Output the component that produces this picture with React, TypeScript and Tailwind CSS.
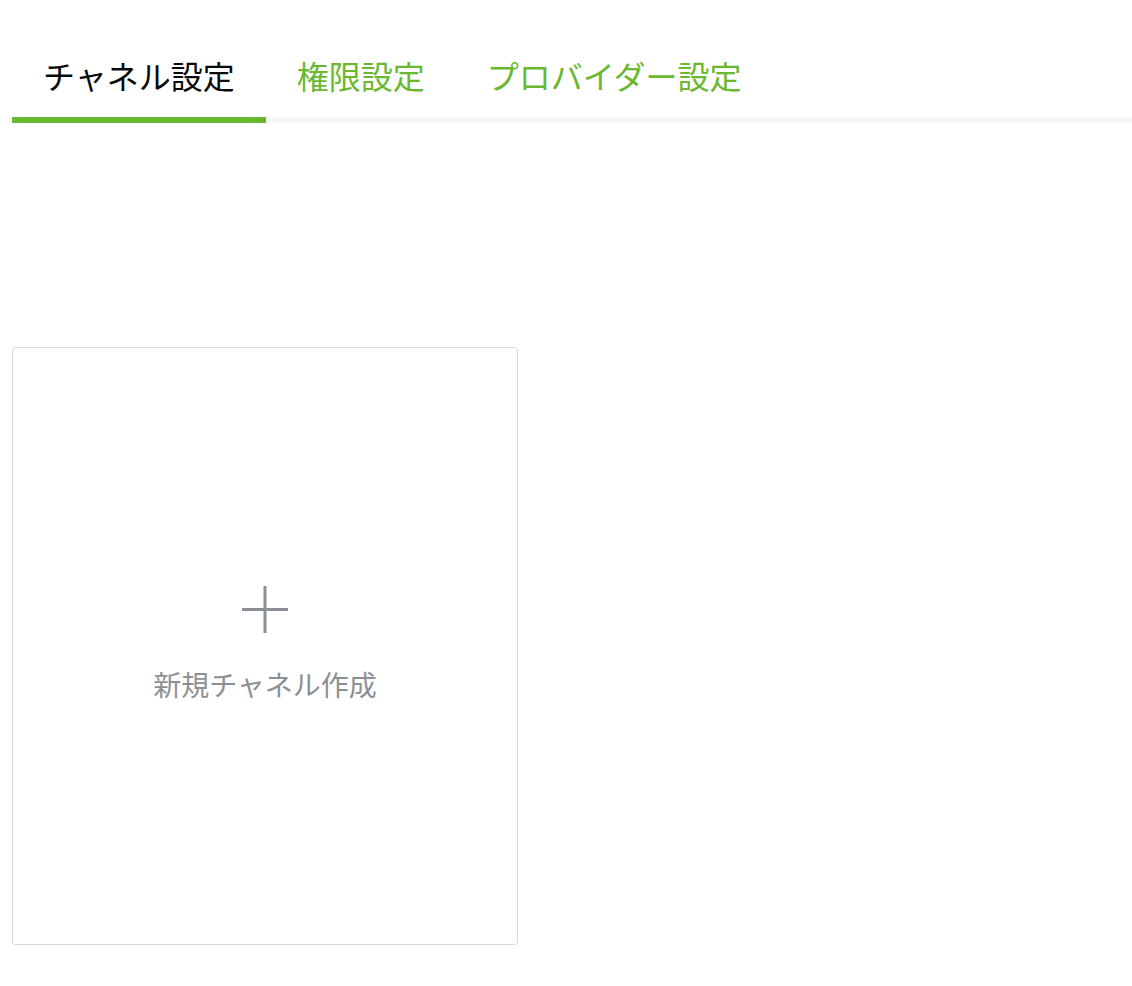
import { useState } from "react";

const tabs = ["チャネル設定", "権限設定", "プロバイダー設定"];

function PlusIcon() {
  return (
    <svg width="46" height="47" viewBox="0 0 46 47" fill="none" aria-hidden="true">
      <line x1="23" y1="0" x2="23" y2="47" stroke="#8a8f96" strokeWidth="3" />
      <line x1="0" y1="23.5" x2="46" y2="23.5" stroke="#8a8f96" strokeWidth="3" />
    </svg>
  );
}

export default function App() {
  const [active, setActive] = useState(0);

  return (
    <div
      className="min-h-screen bg-white pl-3 pt-[52px]"
      style={{ fontFamily: '"Noto Sans CJK JP", "Noto Sans", sans-serif' }}
    >
      <div className="flex border-b-[6px] border-[#f7f7f7]">
        {tabs.map((label, i) => (
          <button
            key={label}
            onClick={() => setActive(i)}
            className={
              i === active
                ? "-mb-[6px] border-b-[6px] border-[#6ab830] px-[31px] pb-[19px] text-[32px] leading-[46px] text-[#0a0a0a]"
                : "-mb-[6px] border-b-[6px] border-transparent px-[31px] pb-[19px] text-[32px] leading-[46px] text-[#6ab830]"
            }
          >
            {label}
          </button>
        ))}
      </div>

      <div className="mt-[224px] flex h-[598px] w-[506px] cursor-pointer flex-col items-center justify-center gap-[36px] rounded-[3px] border border-[#dcdce0] bg-white pb-[8px]">
        <PlusIcon />
        <span className="text-[28px] leading-[30px] text-[#8c9096]">新規チャネル作成</span>
      </div>
    </div>
  );
}
